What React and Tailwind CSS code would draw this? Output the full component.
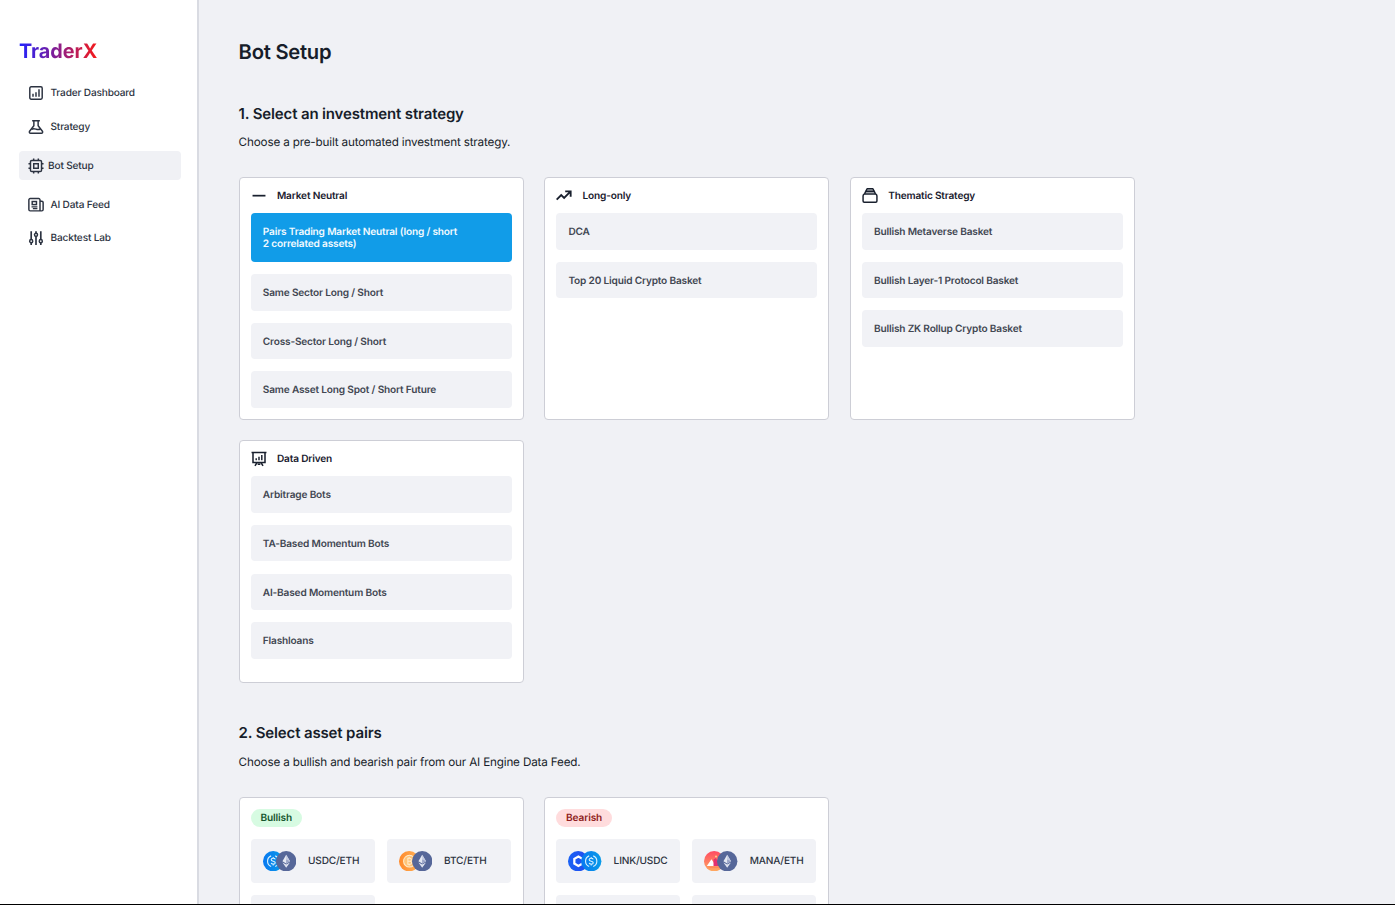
import React from "react";

function Svg({ size = 16, children, className = "" }) {
  return (
    <svg width={size} height={size} viewBox="0 0 24 24" fill="none" stroke="currentColor" strokeWidth="2.2" className={"shrink-0 " + className}>
      {children}
    </svg>
  );
}

const DashboardIcon = () => (
  <Svg>
    <rect x="2.7" y="2.7" width="18.6" height="18.6" rx="2" />
    <path d="M7.5 13v4.5M12 11v6.5M16.5 6.5v11" />
  </Svg>
);

const FlaskIcon = () => (
  <Svg>
    <path d="M6.2 2.5h11.6M8.8 2.5v7.5L2.4 18.4c-.9 1.4-.2 3 1.5 3h16.2c1.7 0 2.4-1.6 1.5-3L15.2 10V2.5" />
    <path d="M5.5 15.4c3-1.5 5-.6 7 0s4 .6 6.3-.4" />
  </Svg>
);

const ChipIcon = () => (
  <Svg>
    <rect x="3.7" y="3.7" width="16.6" height="16.6" rx="2" />
    <rect x="8.6" y="8.6" width="6.8" height="6.8" />
    <path d="M8.5 0.7v3M15.5 0.7v3M8.5 20v3.3M15.5 20v3.3M0.7 8.5H4M0.7 15.5H4M20 8.5h3.3M20 15.5h3.3" />
  </Svg>
);

const NewsIcon = () => (
  <Svg>
    <path d="M18 20.8V4.3a2 2 0 0 0-2-2H3.3a2 2 0 0 0-2 2v14.5a2 2 0 0 0 2 2h17.4a2 2 0 0 0 2-2V8.3a2 2 0 0 0-2-2H18" />
    <rect x="6.3" y="6.8" width="6.4" height="4.6" />
    <path d="M5.3 14.8h8.8M7.3 17.4h6.8" strokeWidth="1.7" />
  </Svg>
);

const SlidersIcon = () => (
  <Svg>
    <path d="M4.8 1.8v12.4M4.8 19.2v3.3M12 1.8v3M12 9.8v12.7M19.2 1.8v12.4M19.2 19.2v3.3" strokeWidth="2.5" />
    <circle cx="4.8" cy="16.7" r="2.3" />
    <circle cx="12" cy="7.3" r="2.3" />
    <circle cx="19.2" cy="16.7" r="2.3" />
  </Svg>
);

const MinusIcon = () => (
  <Svg>
    <path d="M2.3 11.5h19.4" strokeWidth="2.6" />
  </Svg>
);

const TrendIcon = () => (
  <Svg>
    <path d="M1 17.5l6.8-7 4.4 4.4L21.5 5.5M13.8 5h8.2v8.2" strokeWidth="2.8" />
  </Svg>
);

const StackIcon = () => (
  <Svg>
    <path d="M7.2 1.2h9.6M6.1 4.900L7.400 1.200M17.900 4.900L16.600 1.200" />
    <path d="M3.800 8.700l1.900-3.800h12.600l1.900 3.800" />
    <path d="M7 3.100h10M5.600 6.900h12.800" strokeWidth="1.500" opacity="0.450" />
    <path d="M3.300 9.100h17.400c1 .6 1.700 1.600 1.700 2.800v7.600c0 1-.8 1.800-1.800 1.800H3.400c-1 0-1.800-.8-1.800-1.800v-7.600c0-1.200.7-2.200 1.700-2.800z" />
  </Svg>
);

const BoardIcon = () => (
  <Svg>
    <path d="M0.8 2.3h22.4M3 2.3v14.8h18V2.3M9 17.3l-3 5M15 17.3l3 5M10 19.8h4" strokeWidth="2.3" />
    <path d="M7.8 10.8v3M12 8.8v5M16.2 6v7.8" />
  </Svg>
);

function Coin({ kind, overlap }) {
  return (
    <svg width="20.4" height="20.4" viewBox="0 0 20 20" className={overlap ? "-ml-[7.2px] shrink-0" : "shrink-0"}>
      <defs>
        <linearGradient id="usdc" x1="0" x2="1"><stop offset="0" stopColor="#0878f0" /><stop offset="1" stopColor="#0a9be8" /></linearGradient>
        <linearGradient id="btc" x1="0" x2="1"><stop offset="0" stopColor="#ff8a2b" /><stop offset="1" stopColor="#ffb259" /></linearGradient>
        <linearGradient id="mana" x1="0" x2="0" y1="0" y2="1"><stop offset="0" stopColor="#ff4a63" /><stop offset="1" stopColor="#ffab60" /></linearGradient>
        <linearGradient id="link" x1="0" x2="1"><stop offset="0" stopColor="#1a63f5" /><stop offset="1" stopColor="#2348ee" /></linearGradient>
      </defs>
      {kind === "usdc" && (
        <g fill="none" stroke="#d9f1ff" strokeWidth="1.1">
          <circle cx="10" cy="10" r="10" fill="url(#usdc)" stroke="none" />
          <path d="M8 4.8a5.6 5.6 0 0 0 0 10.4M12 4.8a5.6 5.6 0 0 1 0 10.4" />
          <path d="M12 8.2c-.3-.8-1-1.1-2-1.1-1.2 0-2 .5-2 1.4 0 2 4 1 4 3 0 .9-.8 1.4-2 1.4s-1.8-.4-2-1.2M10 5.9v1.2M10 12.9v1.2" />
        </g>
      )}
      {kind === "eth" && (
        <g>
          <circle cx="10" cy="10" r="10" fill="#566799" />
          <path d="M10 3.6L6.3 10.1 10 12.2l3.7-2.1z" fill="#e4e8f2" />
          <path d="M10 3.6v8.6l3.7-2.1z" fill="#c3cae0" />
          <path d="M6.3 11.2L10 16.4l3.7-5.2L10 13.3z" fill="#dfe3ef" />
          <path d="M10 8.4l3.7 1.7L10 12.2z" fill="#9aa4c6" />
        </g>
      )}
      {kind === "btc" && (
        <g fill="none" stroke="#ffeccd">
          <circle cx="10" cy="10" r="10" fill="url(#btc)" stroke="none" />
          <circle cx="10.3" cy="10" r="5.8" strokeWidth="1" fill="#ffc478" />
          <path d="M8.7 7v6M8.2 7h2.3c1 0 1.7.6 1.7 1.5S11.5 10 10.5 10H9h1.700c1 0 1.700.6 1.700 1.500S11.700 13 10.700 13H8.200M10 5.900V7M10 13v1.100" strokeWidth="1" />
        </g>
      )}
      {kind === "link" && (
        <g>
          <circle cx="10" cy="10" r="10" fill="url(#link)" />
          <path d="M14.2 7.7L10.2 5.4 6.2 7.7v4.6l4 2.3 4-2.3" fill="none" stroke="#fff" strokeWidth="2.2" />
        </g>
      )}
      {kind === "mana" && (
        <g>
          <circle cx="10" cy="10" r="10" fill="url(#mana)" />
          <path d="M2.8 14.6L7.3 8.2l4.5 6.4z" fill="#fff" />
          <path d="M9.300 14.600V8.400l2.400-1.600 4.700 7.800z" fill="#e5306f" />
          <path d="M4 15.4h11v1.3H6z" fill="#ff8a58" />
          <circle cx="11.8" cy="5.3" r="1" fill="#ffd08a" />
        </g>
      )}
    </svg>
  );
}

function NavItem({ icon, label, className = "h-[34px]" }) {
  return (
    <a className={"flex items-center pl-[8.5px] text-[10.1px] font-medium tracking-[-0.16px] text-[#2c3341] " + className}>
      {icon}
      <span className="ml-[7px] whitespace-nowrap pt-[1.6px]">{label}</span>
    </a>
  );
}

function Tile({ label, active }) {
  return (
    <div className={"flex items-center rounded-[4px] px-[12.2px] text-[10.1px] leading-[12.2px] font-semibold tracking-[-0.17px] " + (active ? "h-[48.7px] bg-[#119ce8] text-[#f2faff]" : "h-[36.5px] bg-[#f1f2f6] text-[#424752]")}>
      <span className="whitespace-pre-line pt-[1.6px]">{label}</span>
    </div>
  );
}

function Card({ icon, title, items }) {
  return (
    <section className="h-[242.5px] rounded-[4px] border border-[#cdced6] bg-white px-[11px]">
      <h3 className="flex h-[35.2px] items-center text-[10.1px] font-semibold tracking-[-0.17px] text-[#19202e]">
        {icon}
        <span className="ml-[10.4px] pt-[1.6px]">{title}</span>
      </h3>
      <div className="flex flex-col gap-[12.15px]">
        {items.map((t, i) => (
          <Tile key={t} label={t} active={title === "Market Neutral" && i === 0} />
        ))}
      </div>
    </section>
  );
}

function PairCard({ badge, badgeClass, pairs, extra }) {
  return (
    <section className="h-[200px] rounded-[4px] border border-[#cdced6] bg-white px-[11px] pt-[11.2px]">
      <span className={"flex h-[18px] w-fit items-center rounded-full px-[9.8px] pt-[1.6px] text-[10.1px] font-semibold tracking-[-0.12px] " + badgeClass}>{badge}</span>
      <div className="mt-[12px] grid grid-cols-[124px_124px] gap-[12.1px]">
        {pairs.map(([a, b, label]) => (
          <div key={label} className="flex h-[44.3px] items-center rounded-[4px] bg-[#f1f2f6] pl-[12px]">
            <Coin kind={a} />
            <Coin kind={b} overlap />
            <span className="ml-[11.8px] pt-[1.6px] text-[10.1px] font-medium tracking-[-0.16px] text-[#2c3341]">{label}</span>
          </div>
        ))}
        {Array.from({ length: extra }, (_, i) => (
          <div key={i} className="h-[44.3px] rounded-[4px] bg-[#f1f2f6]" />
        ))}
      </div>
    </section>
  );
}

const strategies = [
  { icon: <MinusIcon />, title: "Market Neutral", items: ["Pairs Trading Market Neutral (long / short\n2 correlated assets)", "Same Sector Long / Short", "Cross-Sector Long / Short", "Same Asset Long Spot / Short Future"] },
  { icon: <TrendIcon />, title: "Long-only", items: ["DCA", "Top 20 Liquid Crypto Basket"] },
  { icon: <StackIcon />, title: "Thematic Strategy", items: ["Bullish Metaverse Basket", "Bullish Layer-1 Protocol Basket", "Bullish ZK Rollup Crypto Basket"] },
  { icon: <BoardIcon />, title: "Data Driven", items: ["Arbitrage Bots", "TA-Based Momentum Bots", "AI-Based Momentum Bots", "Flashloans"] },
];

export default function App() {
  return (
    <div className="flex h-[905px] w-[1395px] overflow-hidden border-b border-black bg-[#f0f1f5] font-['Inter',sans-serif] text-[#171d2a] [text-rendering:geometricPrecision]">
      <aside className="w-[199px] shrink-0 border-r-2 border-[#d9dbe2] bg-white pl-[19px] pr-[16px] pt-[39px]">
        <div className="w-fit bg-linear-to-r/srgb from-[#1f22ff] to-[#f51a1a] bg-clip-text text-[19.8px] leading-[24px] font-bold text-transparent">TraderX</div>
        <nav className="mt-[12.5px] flex flex-col">
          <NavItem icon={<DashboardIcon />} label="Trader Dashboard" />
          <NavItem icon={<FlaskIcon />} label="Strategy" />
          <div className="my-[7.5px] flex h-[29px] items-center rounded-[4px] bg-[#f0f1f5] pl-[8.5px] text-[10.1px] font-medium tracking-[-0.16px] text-[#2c3341]">
            <ChipIcon />
            <span className="ml-[4.5px] pt-[1.6px]">Bot Setup</span>
          </div>
          <NavItem icon={<NewsIcon />} label="AI Data Feed" />
          <NavItem icon={<SlidersIcon />} label="Backtest Lab" className="h-[33px]" />
        </nav>
      </aside>
      <main className="pl-[39.6px] pt-[36.5px]">
        <h1 className="text-[20.2px] leading-[30px] font-semibold tracking-[-0.25px]">Bot Setup</h1>
        <h2 className="mt-[37px] text-[15px] leading-[20px] font-semibold tracking-[-0.15px]">1. Select an investment strategy</h2>
        <p className="mt-[9.5px] text-[11.7px] leading-[18px] tracking-[-0.17px]">Choose a pre-built automated investment strategy.</p>
        <div className="mt-[26px] grid grid-cols-[285px_285px_285px] gap-[20.6px]">
          {strategies.map((s) => (
            <Card key={s.title} {...s} />
          ))}
        </div>
        <h2 className="mt-[40.9px] text-[15px] leading-[20px] font-semibold tracking-[-0.15px]">2. Select asset pairs</h2>
        <p className="mt-[9.5px] text-[11.7px] leading-[18px] tracking-[-0.17px]">Choose a bullish and bearish pair from our AI Engine Data Feed.</p>
        <div className="mt-[25.8px] grid grid-cols-[285px_285px] gap-[20.6px]">
          <PairCard badge="Bullish" badgeClass="bg-[#d7fbe2] text-[#15572f]" pairs={[["usdc", "eth", "USDC/ETH"], ["btc", "eth", "BTC/ETH"]]} extra={1} />
          <PairCard badge="Bearish" badgeClass="bg-[#ffdcdd] text-[#8f1d20]" pairs={[["link", "usdc", "LINK/USDC"], ["mana", "eth", "MANA/ETH"]]} extra={2} />
        </div>
      </main>
    </div>
  );
}
